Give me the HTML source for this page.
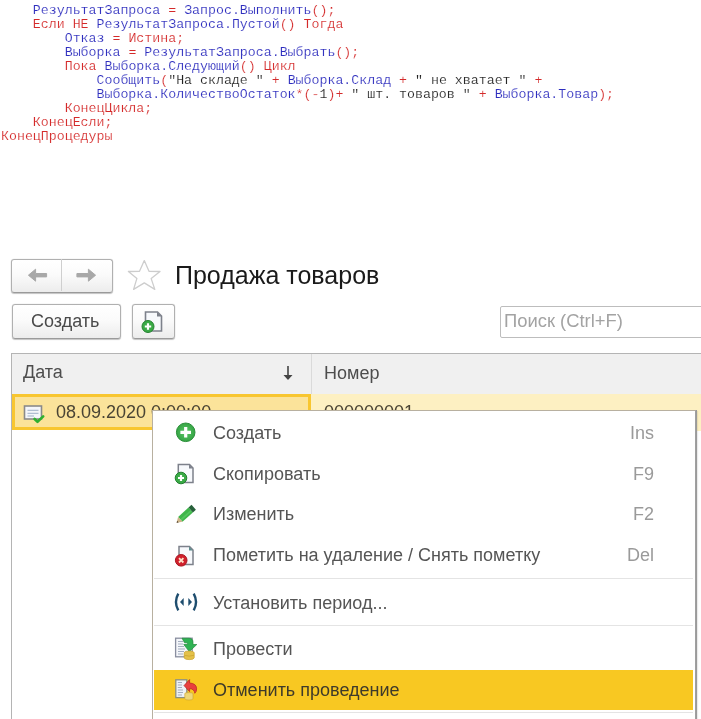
<!DOCTYPE html>
<html><head><meta charset="utf-8">
<style>
*{margin:0;padding:0;box-sizing:border-box}
html,body{width:701px;height:719px;overflow:hidden;background:#fff;position:relative}
.a{position:absolute}
body>*{will-change:transform}
.s{font-family:"Liberation Sans",sans-serif;line-height:1;white-space:pre}
pre{position:absolute;left:1.3px;top:3.75px;font-family:"Liberation Mono",monospace;font-size:13.27px;line-height:14px;color:#222;white-space:pre;-webkit-text-stroke:0.15px #fff}
.k{color:#d42a2a}
.i{color:#2e2ebe}
.btn{position:absolute;border:1px solid #b0b0b0;border-bottom-color:#9a9a9a;border-radius:3px;background:linear-gradient(#ffffff 0%,#fbfbfb 45%,#ececec 100%);box-shadow:0 1px 1px rgba(0,0,0,.22),0 0 0 0.5px rgba(0,0,0,.06)}
.mi{position:absolute;left:213px;font-size:18px;color:#555}
.sc{position:absolute;right:47px;font-size:18px;color:#9a9a9a;text-align:right}
</style></head><body>
<pre><span class="k">    </span><span class="i">РезультатЗапроса</span> <span class="k">=</span> <span class="i">Запрос.Выполнить</span><span class="k">();</span>
    <span class="k">Если НЕ</span> <span class="i">РезультатЗапроса.Пустой</span><span class="k">()</span> <span class="k">Тогда</span>
        <span class="i">Отказ</span> <span class="k">=</span> <span class="k">Истина;</span>
        <span class="i">Выборка</span> <span class="k">=</span> <span class="i">РезультатЗапроса.Выбрать</span><span class="k">();</span>
        <span class="k">Пока</span> <span class="i">Выборка.Следующий</span><span class="k">()</span> <span class="k">Цикл</span>
            <span class="i">Сообщить</span><span class="k">(</span>"На складе " <span class="k">+</span> <span class="i">Выборка.Склад</span> <span class="k">+</span> " не хватает " <span class="k">+</span>
            <span class="i">Выборка.КоличествоОстаток</span><span class="k">*(-</span>1<span class="k">)+</span> " шт. товаров " <span class="k">+</span> <span class="i">Выборка.Товар</span><span class="k">);</span>
        <span class="k">КонецЦикла;</span>
    <span class="k">КонецЕсли;</span>
<span class="k">КонецПроцедуры</span></pre>

<!-- nav group -->
<div class="btn" style="left:11px;top:258.5px;width:102px;height:33.5px"></div>
<div class="a" style="left:61px;top:259px;width:1px;height:32px;background:#cfcfcf"></div>
<svg class="a" style="left:26px;top:266px" width="22" height="18" viewBox="0 0 22 18"><path d="M2.4 9.2 L9.6 3.2 L9.6 7.5 L20.6 7.5 L20.6 10.9 L9.6 10.9 L9.6 15.2 Z" fill="#a8a8a8" stroke="#a8a8a8" stroke-width="1" stroke-linejoin="round"/></svg>
<svg class="a" style="left:76px;top:266px" width="22" height="18" viewBox="0 0 22 18"><path d="M19.6 9.2 L12.4 3.2 L12.4 7.5 L0.9 7.5 L0.9 10.9 L12.4 10.9 L12.4 15.2 Z" fill="#a8a8a8" stroke="#a8a8a8" stroke-width="1" stroke-linejoin="round"/></svg>
<!-- star -->
<svg class="a" style="left:127px;top:259px" width="36" height="33" viewBox="0 0 36 33"><path d="M17.3 1.6 L22 12.3 L33 12.5 L24.2 19.6 L27.8 30.4 L17.3 23.9 L6.6 30.4 L9.9 19.4 L1.4 12.5 L12.5 12.3 Z" fill="none" stroke="#cdcdcd" stroke-width="1.3" stroke-linejoin="round"/></svg>
<div class="a s" style="left:174.5px;top:262.8px;font-size:25px;color:#1a1a1a">Продажа товаров</div>

<!-- create button -->
<div class="btn" style="left:11.5px;top:304px;width:108.5px;height:35px"></div>
<div class="a s" style="left:31px;top:311.5px;font-size:18px;color:#4a4a4a">Создать</div>
<div class="btn" style="left:132px;top:304px;width:43px;height:35px"></div>
<svg class="a" style="left:140px;top:309px" width="26" height="26" viewBox="0 0 26 26">
<path d="M5.5 3 H17.5 L21.5 7 V22 H5.5 Z" fill="#f7f9fc" stroke="#7d818b" stroke-width="1.6"/>
<path d="M17 3 V7.5 H21.5" fill="#7d818b"/>
<circle cx="8" cy="17.5" r="6" fill="#3aaa46" stroke="#23812f" stroke-width="1"/>
<path d="M8 14.3 V20.7 M4.8 17.5 H11.2" stroke="#fff" stroke-width="2.2"/>
</svg>

<!-- search -->
<div class="a" style="left:500px;top:306px;width:210px;height:32px;border:1px solid #bdbdbd;border-radius:2px;background:#fff"></div>
<div class="a s" style="left:504px;top:312.3px;font-size:18.4px;color:#a3a3a3">Поиск (Ctrl+F)</div>

<!-- table -->
<div class="a" style="left:11px;top:353px;width:700px;height:400px;border-left:1px solid #b4b4b4;border-top:1px solid #b4b4b4;background:#fff"></div>
<div class="a" style="left:12px;top:354px;width:700px;height:40px;background:#f0f0f0"></div>
<div class="a" style="left:311px;top:354px;width:1px;height:40px;background:#dadada"></div>
<div class="a s" style="left:22.6px;top:363.3px;font-size:18px;color:#4d4d4d">Дата</div>
<svg class="a" style="left:282px;top:365px" width="12" height="16" viewBox="0 0 12 16"><path d="M6 1 V14" stroke="#444" stroke-width="1.6"/><path d="M1.5 10 L6 15 L10.5 10 Z" fill="#444"/></svg>
<div class="a s" style="left:323.5px;top:363.5px;font-size:18px;color:#4d4d4d">Номер</div>
<div class="a" style="left:311px;top:394px;width:400px;height:37px;background:#fdf0c2"></div>
<div class="a" style="left:12px;top:394px;width:299px;height:36px;border:3px solid #f8c630;background:#fbe39a"></div>
<svg class="a" style="left:22px;top:403px" width="26" height="22" viewBox="0 0 26 22">
<rect x="2.5" y="3" width="17" height="13" fill="#f4f6fa" stroke="#8a8a8a" stroke-width="1.6"/>
<path d="M5.5 7.3 H16.5 M5.5 10.3 H16.5 M5.5 13 H12" stroke="#9fb1c9" stroke-width="1"/>
<path d="M12.6 16 L15.5 18.8 L21.2 13.4" fill="none" stroke="#2fb02f" stroke-width="2.6" stroke-linecap="round" stroke-linejoin="round"/>
</svg>
<div class="a s" style="left:56px;top:402.6px;font-size:18px;color:#4a4434">08.09.2020 0:00:00</div>
<div class="a s" style="left:324px;top:402.6px;font-size:18px;color:#4a4434">000000001</div>

<!-- popup -->
<div class="a" style="left:152px;top:410px;width:543.5px;height:320px;background:#fff;border:1px solid #b8b0a0;border-right-color:#a0a0a0;box-shadow:1px 0 0 #9a9a9a,2px 1px 1px rgba(0,0,0,.08)"></div>
<div class="a" style="left:154px;top:578px;width:538.5px;height:1px;background:#e4e4e4"></div>
<div class="a" style="left:154px;top:625px;width:538.5px;height:1px;background:#e4e4e4"></div>
<div class="a" style="left:154px;top:670px;width:538.5px;height:40px;background:#f8c822"></div>
<div class="a" style="left:154px;top:712px;width:538.5px;height:1px;background:#e4e4e4"></div>

<!-- icons -->
<svg class="a" style="left:175px;top:422px" width="22" height="22" viewBox="0 0 22 22"><defs><radialGradient id="gc"><stop offset="0" stop-color="#5cc868"/><stop offset="1" stop-color="#35a444"/></radialGradient></defs><circle cx="10.7" cy="10.3" r="9.3" fill="url(#gc)" stroke="#2c8f3a" stroke-width="1"/><path d="M10.7 5 V15.6 M5.4 10.3 H16" stroke="#fff" stroke-width="3.2"/></svg>
<svg class="a" style="left:172px;top:460px" width="26" height="26" viewBox="0 0 26 26">
<path d="M6.3 4.5 H17.5 L21 8 V22.5 H6.3 Z" fill="#f7f9fc" stroke="#7d818b" stroke-width="1.5"/>
<path d="M17 4.5 V8.5 H21" fill="#7d818b"/>
<circle cx="9" cy="18" r="5.8" fill="#3aaa46" stroke="#23812f" stroke-width="1"/>
<path d="M9 15 V21 M6 18 H12" stroke="#fff" stroke-width="2.2"/>
</svg>
<svg class="a" style="left:172px;top:502px" width="26" height="26" viewBox="0 0 26 26">

<path d="M10.5 19.8 L6.1 14.9 L16.5 5.55 L20.9 10.45 Z" fill="#3fb64b"/>
<path d="M8.3 17.35 L18.7 8 L19.8 9.2 L9.4 18.6 Z" fill="#5ccc66" opacity=".7"/>
<path d="M16.5 5.55 L20.9 10.45 L23.9 7.75 L19.5 2.85 Z" fill="#27603a"/>
<path d="M4.6 20.7 L10.5 19.8 L6.1 14.9 Z" fill="#cdb488"/>
<path d="M4.6 20.7 L6.6 20.4 L5.1 18.7 Z" fill="#4a3a2a"/>
</svg>
<svg class="a" style="left:172px;top:542px" width="26" height="26" viewBox="0 0 26 26">
<path d="M7 4.5 H17.5 L21 8 V22.5 H7 Z" fill="#f7f9fc" stroke="#7d818b" stroke-width="1.5"/>
<path d="M17 4.5 V8.5 H21" fill="#5f8c8c"/>
<circle cx="9.2" cy="18.3" r="5.8" fill="#d0202c" stroke="#a8141e" stroke-width="1"/>
<path d="M7 16.1 L11.4 20.5 M11.4 16.1 L7 20.5" stroke="#fde2c8" stroke-width="1.8"/>
</svg>
<svg class="a" style="left:172px;top:590px" width="28" height="24" viewBox="0 0 28 24">
<path d="M6.3 3.6 Q1.6 12 6.3 20.4" fill="none" stroke="#1e4d6e" stroke-width="2.4"/>
<path d="M21.7 3.6 Q26.4 12 21.7 20.4" fill="none" stroke="#1e4d6e" stroke-width="2.4"/>
<path d="M8 12 L11.7 8 V16 Z" fill="#1e4d6e"/>
<path d="M20 12 L16.3 8 V16 Z" fill="#1e4d6e"/>
</svg>
<svg class="a" style="left:172px;top:634px" width="28" height="28" viewBox="0 0 28 28">
<rect x="3.6" y="4.2" width="16.6" height="18.6" fill="#f4f6fa" stroke="#8a8fa0" stroke-width="1.3"/>
<path d="M6 7.5 H11 M6 10 H11 M6 12.5 H12 M6 15 H13 M6 17.5 H12 M6 20 H11" stroke="#a3adbf" stroke-width="1"/>
<path d="M10 4.2 H17 Q21 4.2 21 8.5 V10.5 H24.8 L17.3 17.6 L11.8 10.5 H15.6 V9.8 Q15.6 8.8 14.2 8.8 H12.6 Z" fill="#2fb354" stroke="#1f8a3a" stroke-width="0.7"/>
<path d="M12.2 18.8 Q12.2 17 17.2 17 Q22.2 17 22.2 18.8 V23.8 Q22.2 25.6 17.2 25.6 Q12.2 25.6 12.2 23.8 Z" fill="#e4c14a" stroke="#c9a12a" stroke-width="0.7"/>
<path d="M12.5 21.3 Q17.2 23 22 21.3" fill="none" stroke="#c9a12a" stroke-width="0.7"/>
</svg>
<svg class="a" style="left:172px;top:676px" width="28" height="28" viewBox="0 0 28 28">
<rect x="3.8" y="3.8" width="11" height="17.8" fill="#eef2f6" stroke="#8a8f80" stroke-width="1.3"/>
<path d="M5.8 6.5 H10 M5.8 9 H10 M5.8 11.5 H10 M5.8 14 H11 M5.8 16.5 H11 M5.8 19 H10" stroke="#a3adbf" stroke-width="1"/>
<path d="M12.8 17.6 Q12.8 16.6 16.9 16.6 Q21 16.6 21 17.6 V22.8 Q21 24 16.9 24 Q12.8 24 12.8 22.8 Z" fill="#eed778" stroke="#c9a12a" stroke-width="0.6"/>
<path d="M12 9.6 L17.6 3.6 V7 Q24.6 7.4 24.6 12.8 Q24.6 16 22.8 17.3 Q22.4 13 17.6 12.6 V15.6 Z" fill="#e8403e" stroke="#b51e22" stroke-width="0.7" stroke-linejoin="round"/>
</svg>

<div class="mi s" style="top:423.5px">Создать</div>
<div class="mi s" style="top:464.6px">Скопировать</div>
<div class="mi s" style="top:505.3px">Изменить</div>
<div class="mi s" style="top:546.3px">Пометить на удаление / Снять пометку</div>
<div class="mi s" style="top:593.8px">Установить период...</div>
<div class="mi s" style="top:639.8px">Провести</div>
<div class="mi s" style="top:681.4px;color:#3e3a2a">Отменить проведение</div>

<div class="sc s" style="top:423.5px">Ins</div>
<div class="sc s" style="top:464.6px">F9</div>
<div class="sc s" style="top:505.3px">F2</div>
<div class="sc s" style="top:546.3px">Del</div>
</body></html>
